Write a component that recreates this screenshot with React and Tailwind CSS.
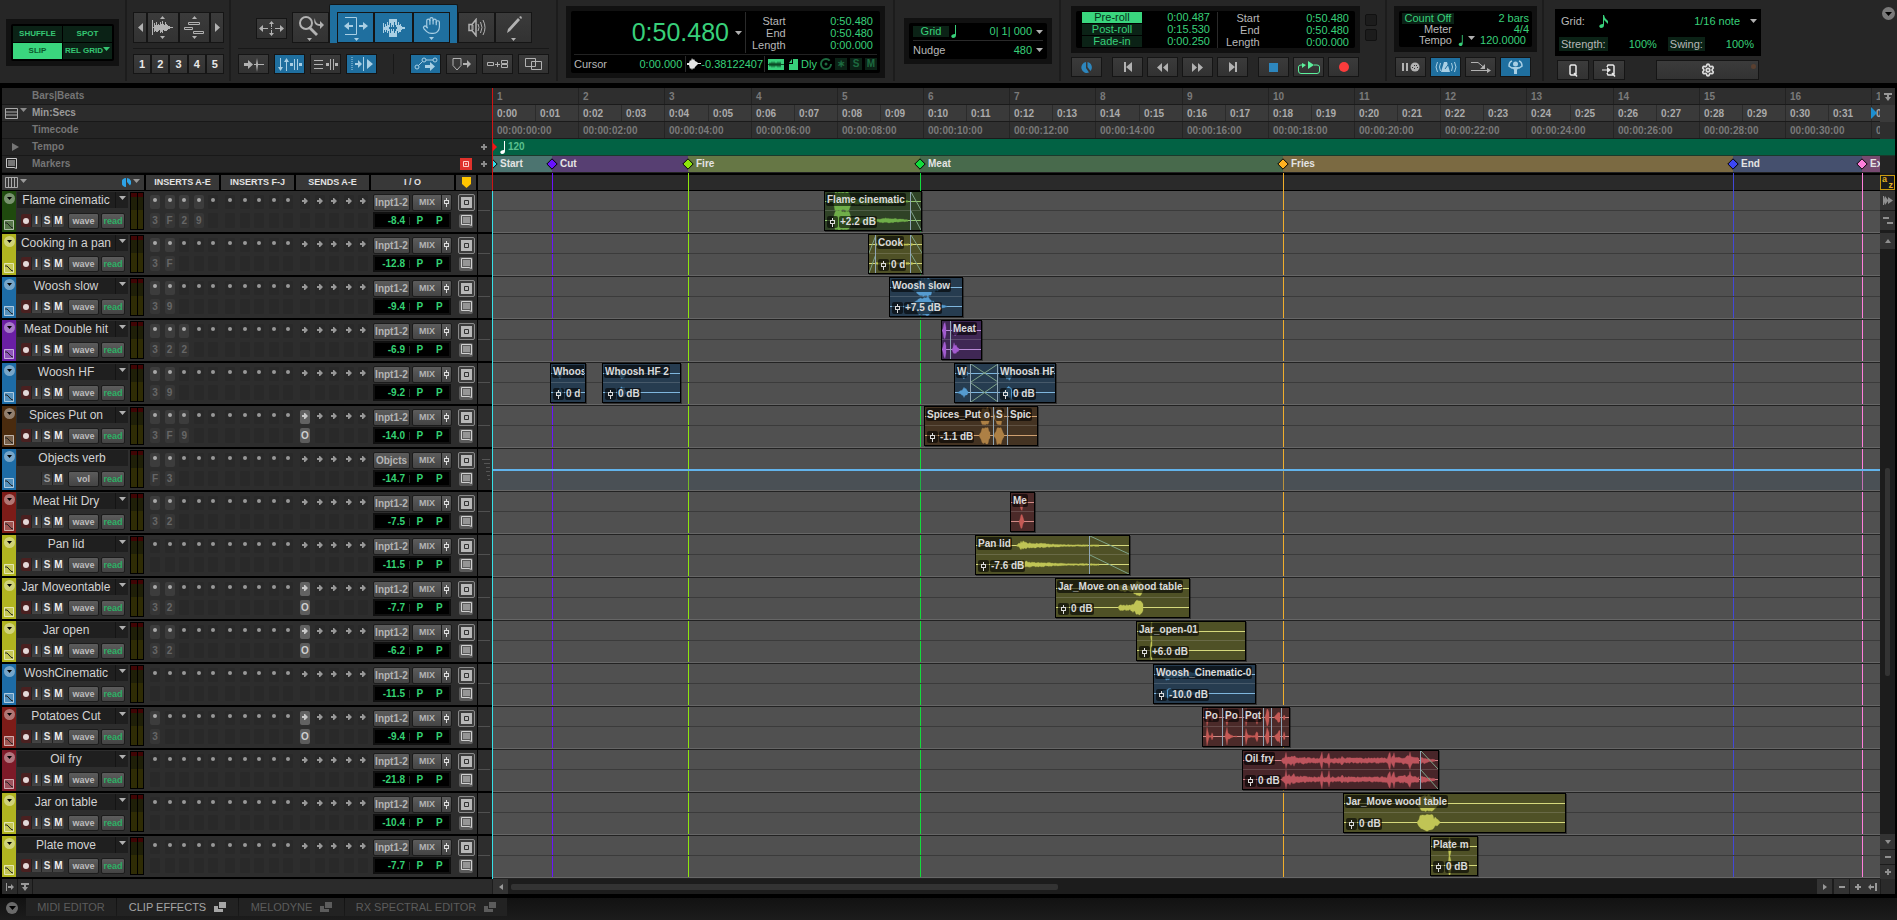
import { useState } from 'react';
import clsx from 'clsx';
import { Hand, Settings } from 'lucide-react';

const PX_PER_SEC = 43.1;

const palettes = {
  green: { strip: 'bg-[#1f4a0e]', clip: 'bg-[#2f4226]', wave: '#6fae49', line: '#8fc46e' },
  yellow: { strip: 'bg-[#b0b420]', clip: 'bg-[#4f5126]', wave: '#c0c455', line: '#d6d97c' },
  blue: { strip: 'bg-[#1d6ca6]', clip: 'bg-[#263c50]', wave: '#559bd0', line: '#7fb6de' },
  purple: { strip: 'bg-[#6a1fa4]', clip: 'bg-[#3f2754]', wave: '#a35bcf', line: '#b98ad6' },
  brown: { strip: 'bg-[#4a2b0e]', clip: 'bg-[#443322]', wave: '#ad8045', line: '#d0a070' },
  red: { strip: 'bg-[#7d1c18]', clip: 'bg-[#4b2a29]', wave: '#c55a55', line: '#d38a86' },
  crimson: { strip: 'bg-[#7d1a28]', clip: 'bg-[#482529]', wave: '#bd545d', line: '#cf7f86' },
};

// env is a list of [x, amplitude] points, one list per clip part
const tracks = [
  { name: 'Flame cinematic', color: 'green', inserts: '3F29', vol: '-8.4', clips: [
    { x: 332, w: 98, parts: [
      { w: 86, name: 'Flame cinematic', db: '+2.2 dB', env: [[8, 0], [10, 10], [24, 10], [26, 3], [45, 4], [52, 2], [62, 3], [72, 2], [84, 1]] },
      { fade: 'out' },
    ] },
  ] },
  { name: 'Cooking in a pan', color: 'yellow', inserts: '3F', vol: '-12.8', clips: [
    { x: 376, w: 55, parts: [
      { w: 7, fade: 'in' },
      { w: 35, name: 'Cook', db: '0 d', env: [[0, 1], [34, 1]] },
      { fade: 'out', env: [[0, 2], [3, 0]] },
    ] },
  ] },
  { name: 'Woosh slow', color: 'blue', inserts: '39', vol: '-9.4', clips: [
    { x: 397, w: 74, parts: [
      { name: 'Woosh slow', db: '+7.5 dB', env: [[12, 0], [22, 3], [30, 9], [38, 10], [44, 5], [58, 0]] },
    ] },
  ] },
  { name: 'Meat Double hit', color: 'purple', inserts: '322', vol: '-6.9', clips: [
    { x: 449, w: 41, parts: [
      { w: 9, env: [[0, 0], [2, 8], [3, 9], [5, 0]] },
      { name: 'Meat', env: [[1, 0], [3, 7], [6, 4], [9, 0]] },
    ] },
  ] },
  { name: 'Woosh HF', color: 'blue', inserts: '39', vol: '-9.2', clips: [
    { x: 58, w: 36, parts: [{ name: 'Whoos', db: '0 d', env: [[5, 0], [9, 6], [12, 0]] }] },
    { x: 110, w: 79, parts: [{ name: 'Whoosh HF 2', db: '0 dB', env: [[14, 0], [18, 6], [21, 5], [24, 0]] }] },
    { x: 462, w: 102, parts: [
      { w: 16, name: 'W', env: [[2, 0], [6, 2], [9, 7], [13, 1], [14, 0]] },
      { w: 27, fade: 'cross' },
      { name: 'Whoosh HF', db: '0 dB', env: [[5, 0], [9, 7], [13, 7], [15, 0]] },
    ] },
  ] },
  { name: 'Spices Put on', color: 'brown', inserts: '3F9', send: true, vol: '-14.0', clips: [
    { x: 432, w: 114, parts: [
      { w: 69, name: 'Spices_Put o', db: '-1.1 dB', env: [[54, 0], [57, 8], [63, 9], [66, 1]] },
      { w: 14, name: 'S', env: [[0, 1], [3, 9], [7, 9], [11, 0]] },
      { name: 'Spic' },
    ] },
  ] },
  { name: 'Objects verb', color: 'blue', aux: true, inserts: 'F3', input: 'Objcts', vol: '-14.7', clips: [] },
  { name: 'Meat Hit Dry', color: 'red', inserts: '32', vol: '-7.5', clips: [
    { x: 518, w: 25, parts: [{ name: 'Me', env: [[8, 0], [10, 8], [11, 8], [13, 1], [14, 0]] }] },
  ] },
  { name: 'Pan lid', color: 'yellow', inserts: '', vol: '-11.5', clips: [
    { x: 483, w: 155, parts: [
      { w: 114, name: 'Pan lid', db: '-7.6 dB', env: [[40, 0], [46, 5], [52, 3], [75, 2], [90, 1], [113, 1]] },
      { fade: 'out', env: [[0, 1], [9, 1], [10, 0]] },
    ] },
  ] },
  { name: 'Jar Moveontable', color: 'yellow', inserts: '32', send: true, vol: '-7.7', clips: [
    { x: 563, w: 135, parts: [
      { name: 'Jar_Move on a wood table', db: '0 dB', env: [[62, 0], [64, 4], [74, 3], [81, 8], [86, 7], [88, 0]] },
    ] },
  ] },
  { name: 'Jar open', color: 'yellow', inserts: '32', send: true, vol: '-6.2', clips: [
    { x: 644, w: 110, parts: [{ name: 'Jar_open-01', db: '+6.0 dB', env: [[13, 0], [14, 10], [15, 10], [16, 0]] }] },
  ] },
  { name: 'WoshCinematic', color: 'blue', inserts: '', vol: '-11.5', clips: [
    { x: 661, w: 103, parts: [
      { name: 'Woosh_Cinematic-0', db: '-10.0 dB', env: [[6, 0], [12, 6], [20, 4], [30, 4], [40, 2], [52, 0]] },
    ] },
  ] },
  { name: 'Potatoes Cut', color: 'red', inserts: '3', send: true, vol: '-9.4', clips: [
    { x: 710, w: 88, parts: [
      { w: 20, name: 'Po', env: [[3, 0], [4, 10], [6, 1], [8, 1], [9, 4], [11, 0]] },
      { w: 20, name: 'Po', env: [[2, 0], [4, 10], [5, 4], [8, 2], [11, 0], [13, 1], [15, 0]] },
      { w: 21, name: 'Pot', env: [[2, 0], [3, 10], [5, 2], [8, 1], [12, 1], [14, 7], [16, 0]] },
      { w: 8, env: [[1, 0], [3, 9], [5, 7], [6, 0]] },
      { w: 10, env: [[2, 0], [6, 6], [8, 7], [9, 0]] },
      { env: [[1, 0], [2, 5], [4, 0]] },
    ] },
  ] },
  { name: 'Oil fry', color: 'crimson', inserts: '', vol: '-21.8', clips: [
    { x: 750, w: 197, parts: [
      { w: 178, name: 'Oil fry', db: '0 dB', env: [[38, 0], [40, 3], [42, 4], [43, 10], [44, 4], [47, 6], [49, 5], [51, 6], [53, 3], [60, 4], [68, 3], [77, 3], [79, 10], [80, 3], [84, 3], [86, 9], [87, 3], [97, 3], [99, 6], [101, 3], [115, 3], [127, 3], [144, 3], [147, 10], [148, 3], [151, 9], [152, 3], [160, 4], [165, 5], [167, 9], [169, 4], [177, 3]] },
      { fade: 'out', env: [[0, 4], [8, 2], [15, 1]] },
    ] },
  ] },
  { name: 'Jar on table', color: 'yellow', inserts: '', vol: '-10.4', clips: [
    { x: 851, w: 223, parts: [{ name: 'Jar_Move wood table', db: '0 dB', env: [[73, 0], [76, 7], [82, 9], [88, 8], [93, 4], [97, 0]] }] },
  ] },
  { name: 'Plate move', color: 'yellow', inserts: '', vol: '-7.7', clips: [
    { x: 938, w: 48, parts: [{ name: 'Plate m', db: '0 dB', env: [[17, 0], [18, 10], [19, 10], [21, 0]] }] },
  ] },
];

const markers = [
  { name: 'Start', x: 0, w: 60, dot: '#35e0e6', band: 'bg-[#4c7470]', line: 'bg-[#35e0e6]' },
  { name: 'Cut', x: 60, w: 136, dot: '#6a12ff', band: 'bg-[#573f72]', line: 'bg-[#6a12ff]' },
  { name: 'Fire', x: 196, w: 232, dot: '#8ee60c', band: 'bg-[#667745]', line: 'bg-[#8ee60c]' },
  { name: 'Meat', x: 428, w: 363, dot: '#12dc3c', band: 'bg-[#486a4c]', line: 'bg-[#12dc3c]' },
  { name: 'Fries', x: 791, w: 450, dot: '#ffb020', band: 'bg-[#7b6a42]', line: 'bg-[#f0ae2c]' },
  { name: 'End', x: 1241, w: 129, dot: '#3c46f5', band: 'bg-[#45506e]', line: 'bg-[#4248d8]' },
  { name: 'Ex', x: 1370, w: 120, dot: '#ff7edb', band: 'bg-[#774a70]', line: 'bg-[#ff7edb]' },
];

const pad = (n) => String(n).padStart(2, '0');

function Svg({ w, h, className, children }) {
  return (
    <svg width={w} height={h} viewBox={`0 0 ${w} ${h}`} fill="currentColor" className={clsx('shrink-0', className)} aria-hidden="true">
      {children}
    </svg>
  );
}

function Caret({ className = 'text-[#b0b0b0]' }) {
  return (
    <Svg w={7} h={4} className={className}><path d="M0 0h7L3.5 4z" /></Svg>
  );
}

function ToolButton({ label, active, className, children }) {
  return (
    <button
      type="button"
      aria-label={label}
      aria-pressed={active}
      className={clsx(
        'flex items-center justify-center border border-[#151515]',
        active ? 'bg-[#1f6f9f] text-[#a9cfe4]' : 'bg-linear-to-b from-[#3b3b3b] to-[#323232] text-[#b2b2b2]',
        className
      )}
    >
      {children}
    </button>
  );
}

function Group({ className, children }) {
  return <div className={clsx('h-[81px] shrink-0 border-r-2 border-[#1c1c1c]', className)}>{children}</div>;
}

function EditModes() {
  return (
    <Group className="w-[127px] px-[6px] pt-[19px]">
      <div className="bg-[#111] p-[5px]">
        <div className="grid grid-cols-2 gap-px rounded-xs bg-black p-[2px] text-[8px] font-bold text-[#36c774]">
          <button type="button" className="h-4 bg-[#0b2216]">SHUFFLE</button>
          <button type="button" className="h-4 bg-[#0b2216]">SPOT</button>
          <button type="button" className="h-4 bg-[#3ad67e] text-[#0b5a2c]">SLIP</button>
          <button type="button" className="flex h-4 items-center justify-center bg-[#0b2216]">
            REL GRID<Caret className="mb-1 text-[#36c774]" />
          </button>
        </div>
      </div>
    </Group>
  );
}

function UpDown({ children }) {
  return (
    <span className="flex flex-col items-center">
      <Svg w={5} h={3}><path d="M2.5 0L5 3H0z" /></Svg>
      {children}
      <Svg w={5} h={3}><path d="M0 0h5L2.5 3z" /></Svg>
    </span>
  );
}

function ZoomGroup() {
  return (
    <Group className="w-[104px] pl-[6px] pt-3">
      <div className="flex w-[91px]">
        <ToolButton label="Zoom out" className="h-[31px] w-[14px]"><Svg w={5} h={9}><path d="M5 0v9L0 4.500z" /></Svg></ToolButton>
        <ToolButton label="Audio zoom" className="h-[31px] flex-1">
          <UpDown>
            <Svg w={21} h={17}>
              <path d="M0 1h1v15H0zM2 4h1v9H2zM3 6h1v6H3zM4 3h1v10H4zM5 6h1v7H5zM6 5h1v7H6zM7 6h1v5H7zM8 3h1v11H8zM9 5h1v8H9zM10 2h1v12h-1zM11 5h1v6h-1zM12 6h1v6h-1zM13 3h1v9h-1zM14 5h1v7h-1zM15 6h1v5h-1zM16 7h2v3h-2zM18 8h3v1h-3zM0 8h16v1H0z" />
            </Svg>
          </UpDown>
        </ToolButton>
        <ToolButton label="MIDI zoom" className="h-[31px] flex-1">
          <UpDown>
            <Svg w={21} h={17}>
              <g fill="none" stroke="currentColor">
                <path d="M4.500 3.500h11v2h-11zM.5 8.500h8v2h-8zM9.500 12.500h10v2h-10z" />
              </g>
            </Svg>
          </UpDown>
        </ToolButton>
        <ToolButton label="Zoom in" className="h-[31px] w-[14px]"><Svg w={5} h={9}><path d="M0 0v9l5-4.500z" /></Svg></ToolButton>
      </div>
      <div className="mt-[5px] h-px w-[91px] bg-[#181818]" />
      <div className="mt-[5px] flex w-[91px]">
        {[1, 2, 3, 4, 5].map((n) => (
          <ToolButton key={n} label={`Zoom preset ${n}`} className="h-5 flex-1">
            <span className="text-[11px] font-bold text-[#e8e8e8]">{n}</span>
          </ToolButton>
        ))}
      </div>
    </Group>
  );
}

function EditTools() {
  return (
    <Group className="w-[327px] px-[7px] pt-1">
      <div className="flex h-[39px] items-end pl-[18px]">
        <ToolButton label="Zoom toggle" className="mr-[5px] mb-1 h-[21px] w-[31px]">
          <Svg w={25} h={15}>
            <path d="M0 7.500L4 4v3h5v1H4v3zM25 7.500L21 4v3h-5v1h5v3zM12.500 0L15 3h-2v3h-1V3h-2zM12.500 15L15 12h-2V9h-1v3h-2zM12 7h1v1h-1z" />
          </Svg>
        </ToolButton>
        <ToolButton label="Zoomer" className="h-[31px] w-[37px]">
          <Svg w={28} h={26}>
            <circle cx="9" cy="8" r="6" fill="none" stroke="currentColor" strokeWidth="2" />
            <path d="M13 11l8 8-2 2-8-8zM18 3c0 4 2 6 5 6V6l4 4-4 4v-3c-5 0-7-4-5-8zM10 23h5l-2.500 3z" />
          </Svg>
        </ToolButton>
        <div className="flex h-[39px] items-end rounded-t-xs border border-b-0 border-[#151515] bg-[#1f6f9f] px-[7px]">
          <ToolButton label="Trim" active className="h-[31px] w-[37px]">
            <Svg w={24} h={26}>
              <path d="M0 11l5-4v3h4v2H5v3zM24 11l-5-4v3h-4v2h4v3zM10 23h5l-2.500 3z" />
              <path d="M1 2.500h11.500v17H1" fill="none" stroke="currentColor" />
            </Svg>
          </ToolButton>
          <ToolButton label="Selector" active className="h-[31px] w-[39px]">
            <Svg w={22} h={18}>
              <path d="M6 0h8v18H6z" />
              <path d="M0 4h1v10H0zM1 8h1v3H1zM2 5h1v8H2zM3 7h1v4H3zM4 3h1v11H4zM5 6h1v6H5zM15 3h1v11h-1zM14 6h1v6h-1zM16 6h1v7h-1zM17 5h1v8h-1zM18 7h1v4h-1zM19 8h3v2h-3z" />
              <path d="M6 8h8v2H6zM7 4h1v10H7zM9 6h1v6H9zM11 3h1v11h-1zM12 6h1v6h-1z" fill="#1f6f9f" />
            </Svg>
          </ToolButton>
          <ToolButton label="Grabber" active className="h-[31px] w-[37px] flex-col gap-[2px]">
            <Hand size={19} strokeWidth={1.5} />
            <Svg w={5} h={3}><path d="M0 0h5L2.5 3z" /></Svg>
          </ToolButton>
        </div>
        <ToolButton label="Scrubber" className="h-[31px] w-[37px]">
          <Svg w={18} h={19}>
            <path d="M1 6.500h3l4-5v16l-4-5H1z" fill="none" stroke="currentColor" strokeWidth="1.500" />
            <path d="M4 7h1v5H4zM10 6q2 3.500 0 7M12.500 4q3 5.500 0 11M15 2q4 7.500 0 15" fill="none" stroke="currentColor" />
          </Svg>
        </ToolButton>
        <ToolButton label="Pencil" className="h-[31px] w-[37px]">
          <Svg w={18} h={26}>
            <path d="M2 18l1-4 10-11 2 2L5 16zM14 2l2-1 1 2-1 1zM6 23h5l-2.500 3z" />
          </Svg>
        </ToolButton>
      </div>
      <div className="mt-[5px] h-px bg-[#181818]" />
      <div className="mt-[5px] flex items-center justify-between">
        <div className="flex gap-[5px]">
          <ToolButton label="Tab to transients" className="h-5 w-[31px]">
            <Svg w={20} h={15}><path d="M0 6h4V3l5 4.500L4 12V9H0zM12 7l1-6 1 6h6v1h-6l-1 7-1-7h-2V7z" /></Svg>
          </ToolButton>
          <ToolButton label="Link timeline" active className="h-5 w-[31px]">
            <Svg w={24} h={13}>
              <path d="M2 0h1v9h2l-2.500 4L0 9h2zM8 13V4H6l2.500-4L11 4H9v9zM12 5h3v3h-3zM16 1h1v11h-1zM19 1h1v11h-1zM21 5h3v3h-3z" />
            </Svg>
          </ToolButton>
          <ToolButton label="Link track" className="h-5 w-[31px]">
            <Svg w={24} h={13}><path d="M0 2h9v1H0zM0 6h9v1H0zM0 10h9v1H0zM12 5h3v3h-3zM16 1h1v11h-1zM19 1h1v11h-1zM21 5h3v3h-3z" /></Svg>
          </ToolButton>
          <ToolButton label="Insertion follows playback" active className="h-5 w-[31px]">
            <Svg w={22} h={14}>
              <path d="M1 0v14" stroke="currentColor" strokeDasharray="1 1" />
              <path d="M4 6h3V3l4 4-4 4V8H4zM12 0h1v14h-1zM16 2l6 5-6 5z" />
            </Svg>
          </ToolButton>
        </div>
        <div className="h-5 w-px bg-[#181818]" />
        <div className="flex gap-[5px]">
          <ToolButton label="Automation follows edit" active className="h-5 w-[31px]">
            <Svg w={24} h={14}>
              <g fill="none" stroke="currentColor">
                <circle cx="3" cy="10" r="2" /><circle cx="10" cy="3" r="2" /><circle cx="21" cy="3" r="2" />
                <path d="M4.500 8.500l4-4M12 3h7" />
              </g>
              <path d="M11 8h5V5l5 4.500-5 4.500v-3h-5z" />
            </Svg>
          </ToolButton>
          <ToolButton label="Markers follow edit" className="h-5 w-[31px]">
            <Svg w={20} h={13}><path d="M1 .5h8v7L5 12 1 7.500z" fill="none" stroke="currentColor" /><path d="M11 5h4V2l4 4-4 4V7h-4z" /></Svg>
          </ToolButton>
          <ToolButton label="Mirrored MIDI editing" className="h-5 w-[31px]">
            <Svg w={22} h={12}>
              <path d="M.5 4.500h6v3h-6zM14.500 2.500h6v3h-6zM14.500 6.500h6v3h-6z" fill="none" stroke="currentColor" />
              <path d="M8 6h2V4h1v2h2v1h-2v2h-1V7H8z" />
            </Svg>
          </ToolButton>
          <ToolButton label="Layered editing" className="h-5 w-[31px]">
            <Svg w={18} h={12}><path d="M.5 .5h10v8H.5zM6.500 3.500h10v8h-10z" fill="none" stroke="currentColor" /></Svg>
          </ToolButton>
        </div>
      </div>
    </Group>
  );
}

function SelectionRows({ className }) {
  return (
    <dl className={clsx('grid grid-cols-[auto_1fr] text-right text-[11px] leading-[12px]', className)}>
      <dt className="text-[#b8b8b8]">Start</dt><dd>0:50.480</dd>
      <dt className="text-[#b8b8b8]">End</dt><dd>0:50.480</dd>
      <dt className="text-[#b8b8b8]">Length</dt><dd>0:00.000</dd>
    </dl>
  );
}

function MainCounter() {
  return (
    <Group className="w-[337px] px-2 pt-[6px]">
      <div className="bg-[#111] p-[5px]">
        <div className="rounded-xs bg-black px-[3px] text-[#38d07a]">
          <div className="flex h-[44px] items-center border-b border-[#222]">
            <button type="button" className="flex h-[41px] w-[172px] items-center justify-end gap-[6px] border-r border-[#2a2a2a] pr-[3px] text-[25px]">
              0:50.480 <Caret />
            </button>
            <SelectionRows className="flex-1 pl-[6px] pr-1" />
          </div>
          <div className="flex h-[18px] items-center text-[11px]">
            <span className="text-[#b8b8b8]">Cursor</span>
            <span className="ml-auto border-r border-[#2a2a2a] pr-[3px]">0:00.000</span>
            <Svg w={14} h={12} className="ml-px text-[#e6e6e6]">
              <path d="M0 5h2l1-3 1 1 1-3 1 2 1-1 1 2 2 1 1 1h3v1h-3l-1 1-2 2-1 2-1-1-1 2-1-2-1 1-1-4H0z" />
            </Svg>
            <span className="border-r border-[#2a2a2a] pr-px">-0.38122407</span>
            <button type="button" aria-label="Timeline data online" className="ml-[3px] flex h-[11px] w-4 items-center justify-center bg-[#38d07a] text-[#0b4a26]">
              <Svg w={16} h={9}><path d="M0 4h1l1-2 1 2 1-3 1 3 1-3 1 3 1-2 1 2 1-3 1 3 1-3 1 3h3v1h-3l-1 3-1-3-1 3-1-3-1 2-1-2-1 3-1-3-1 3-1-3-1 2-1-2H0z" /></Svg>
            </button>
            <Svg w={9} h={11} className="ml-[5px]"><path d="M4 0h5v11H0V5h4zM3 0v4H0z" /></Svg>
            <span className="ml-[3px]">Dly</span>
            <Svg w={12} h={12} className="ml-[3px] text-[#1d6b40]">
              <circle cx="6" cy="6" r="5" fill="none" stroke="currentColor" strokeWidth="2" strokeDasharray="27 4" /><circle cx="6" cy="6" r="1.500" />
            </Svg>
            {['∗', 'S', 'M'].map((t) => (
              <button key={t} type="button" className="ml-[3px] h-3 w-3 bg-[#0b2216] text-[10px] leading-[12px] font-bold text-[#1d6b40]">{t}</button>
            ))}
          </div>
        </div>
      </div>
    </Group>
  );
}

function Note({ className }) {
  return (
    <Svg w={6} h={13} className={className}><path d="M4 0h1v10c0 2-1 3-3 3-3-1-2-4 2-4z" /></Svg>
  );
}

function GridNudge() {
  return (
    <Group className="w-[166px] pl-[9px] pt-[18px]">
      <div className="w-[148px] bg-[#111] p-[5px]">
        <div className="rounded-xs bg-black px-1 text-[11px] text-[#38d07a]">
          <div className="flex h-[18px] items-center border-b border-[#2a2a2a]">
            <label htmlFor="grid-value" className="w-9 bg-[#0b2216] text-center leading-[11px]">Grid</label>
            <Note className="ml-[2px]" />
            <select id="grid-value" className="ml-auto w-[60px] appearance-none text-right outline-none">
              <option>0| 1| 000</option>
            </select>
            <Caret className="ml-1 text-[#b0b0b0]" />
          </div>
          <div className="flex h-[18px] items-center">
            <label htmlFor="nudge-value" className="text-[#b8b8b8]">Nudge</label>
            <select id="nudge-value" className="ml-auto w-[40px] appearance-none text-right outline-none">
              <option>480</option>
            </select>
            <Caret className="ml-1 text-[#b0b0b0]" />
          </div>
        </div>
      </div>
    </Group>
  );
}

function Transport() {
  const rolls = [['Pre-roll', '0:00.487', true], ['Post-roll', '0:15.530'], ['Fade-in', '0:00.250']];
  return (
    <Group className="w-[326px] pl-[10px] pt-[6px]">
      <div className="flex gap-[5px]">
        <div className="w-[289px] bg-[#111] p-[5px]">
          <div className="flex h-[37px] items-center rounded-xs bg-black pl-[6px] text-[11px] text-[#38d07a]">
            <div className="w-[136px] border-r border-[#2a2a2a] pr-[7px]">
              {rolls.map(([label, value, on]) => (
                <div key={label} className="flex h-3 items-center justify-between leading-[11px]">
                  <button type="button" className={clsx('h-[11px] w-[60px]', on ? 'bg-[#3ad67e] text-[#06331a]' : 'bg-[#0b2216]')}>{label}</button>
                  <span>{value}</span>
                </div>
              ))}
            </div>
            <SelectionRows className="flex-1 pl-2 pr-[6px]" />
          </div>
        </div>
        <div className="flex flex-col gap-[3px] pt-2">
          <div className="h-3 w-3 rounded-xs border border-[#111] bg-[#1c1c1c]" />
          <div className="h-3 w-3 rounded-xs border border-[#111] bg-[#1c1c1c]" />
        </div>
      </div>
      <div className="mt-1 flex gap-1">
        <ToolButton label="Online" className="mr-[6px] h-5 w-[31px]">
          <Svg w={11} h={11} className="text-[#2d86bd]"><path d="M5 0v6l3 4.500A5.500 5.500 0 1 1 5 0zM6.500 0A5.500 5.500 0 0 1 9.500 9L6.500 5z" /></Svg>
        </ToolButton>
        <ToolButton label="Return to zero" className="h-5 w-[31px]"><Svg w={8} h={10}><path d="M0 0h2v10H0zM8 0v10L2 5z" /></Svg></ToolButton>
        <ToolButton label="Rewind" className="h-5 w-[31px]"><Svg w={11} h={9}><path d="M5 0v9L0 4.500zM11 0v9L6 4.500z" /></Svg></ToolButton>
        <ToolButton label="Fast forward" className="h-5 w-[31px]"><Svg w={11} h={9}><path d="M0 0v9l5-4.500zM6 0v9l5-4.500z" /></Svg></ToolButton>
        <ToolButton label="Go to end" className="mr-[6px] h-5 w-[31px]"><Svg w={8} h={10}><path d="M6 0h2v10H6zM0 0v10l6-5z" /></Svg></ToolButton>
        <ToolButton label="Stop" className="h-5 w-[31px]"><Svg w={9} h={9} className="text-[#2d86bd]"><path d="M0 0h9v9H0z" /></Svg></ToolButton>
        <ToolButton label="Loop playback" className="h-5 w-[31px]">
          <Svg w={22} h={13} className="text-[#5cf09c]">
            <path d="M5 4H3Q.5 4 .5 6v4q0 2.500 2.500 2.500h16q2.500 0 2.500-2.500V6q0-2-2.500-2h-3" fill="none" stroke="currentColor" />
            <path d="M10 0l6 4-6 4zM4 2l4 2-4 3z" />
          </Svg>
        </ToolButton>
        <ToolButton label="Record" className="h-5 w-[31px]"><Svg w={10} h={10} className="text-[#fa3c3c]"><circle cx="5" cy="5" r="5" /></Svg></ToolButton>
      </div>
    </Group>
  );
}

function MidiControls() {
  return (
    <Group className="w-[157px] pl-[7px] pt-[6px]">
      <div className="w-[143px] bg-[#111] p-[5px]">
        <div className="flex h-[36px] flex-col justify-center rounded-xs bg-black px-[3px] text-[11px] leading-[11px] text-[#38d07a]">
          <div className="flex justify-between"><button type="button" className="w-[52px] bg-[#0b2216]">Count Off</button><span>2 bars</span></div>
          <div className="flex justify-between"><span className="w-[50px] text-right text-[#b8b8b8]">Meter</span><span>4/4</span></div>
          <div className="flex items-center"><span className="w-[50px] text-right text-[#b8b8b8]">Tempo</span><Note className="ml-[6px] h-[11px]" /><Caret className="ml-1 mb-1 text-[#b0b0b0]" /><span className="ml-auto pr-[3px]">120.0000</span></div>
        </div>
      </div>
      <div className="mt-[5px] flex gap-1 pl-px">
        <ToolButton label="Wait for note" className="h-5 w-[31px]">
          <Svg w={18} h={10}>
            <path d="M0 1h2v8H0zM4 1h2v8H4z" /><circle cx="13" cy="5" r="4.500" />
            <path d="M10 5h1v1h-1zM12 3h1v1h-1zM15 5h1v1h-1zM12 6h1v1h-1zM14 3h1v1h-1z" fill="#333" />
          </Svg>
        </ToolButton>
        <ToolButton label="Metronome" active className="h-5 w-[31px]">
          <Svg w={22} h={12}>
            <path d="M9 1h3l3 10H6z" /><path d="M10 8l5-7" stroke="#1f6f9f" />
            <path d="M2.500 1q-3 5 0 10M5.500 2q-2 4 0 8M19.500 1q3 5 0 10M16.500 2q2 4 0 8" fill="none" stroke="currentColor" />
          </Svg>
        </ToolButton>
        <ToolButton label="MIDI merge" className="h-5 w-[31px]">
          <Svg w={20} h={12}><path d="M0 1.500h7l6 5M0 9.500h18" fill="none" stroke="currentColor" /><path d="M14 3v5H9zM16 7l4 2.500-4 2.500z" /></Svg>
        </ToolButton>
        <ToolButton label="Conductor" active className="h-5 w-[31px]">
          <Svg w={15} h={14}>
            <circle cx="7.500" cy="4" r="2.500" />
            <path d="M4 1Q1 2 1 6l3 2h7l3-2q0-4-3-5" fill="none" stroke="currentColor" strokeWidth="1.500" /><path d="M4 7h7l-2 3v4H6v-4z" />
          </Svg>
        </ToolButton>
      </div>
    </Group>
  );
}

function Quantize() {
  return (
    <div className="flex flex-1 justify-between pl-[11px]">
      <div className="w-[206px] pt-[9px]">
        <div className="flex h-[47px] flex-col justify-between bg-black px-1 py-1 text-[11px] text-[#38d07a]">
          <div className="flex items-center pl-[2px]">
            <label htmlFor="q-grid" className="text-[#b8b8b8]">Grid:</label>
            <Svg w={9} h={13} className="ml-[14px]"><path d="M4 0h1l1 3 3 3v3L5 5v5c0 2-1 3-3 3-3-1-2-4 2-4z" /></Svg>
            <select id="q-grid" className="ml-auto w-[60px] appearance-none text-right outline-none">
              <option>1/16 note</option>
            </select>
            <Caret className="ml-[10px] text-[#b0b0b0]" />
          </div>
          <div className="flex items-center pr-[3px]">
            <span className="bg-[#0b2216] px-[2px] leading-[14px] text-[#b8b8b8]">Strength:</span>
            <span className="ml-auto">100%</span>
            <span className="ml-[11px] bg-[#0b2216] px-[2px] leading-[14px] text-[#b8b8b8]">Swing:</span>
            <span className="ml-auto">100%</span>
          </div>
        </div>
        <div className="mt-1 flex gap-1 px-[2px]">
          <ToolButton label="Quantize" className="h-5 w-8">
            <Svg w={10} h={13} className="text-[#e8e8e8]"><path d="M3 1h4l1 1v8l-1 1H3l-1-1V2zM6 9l3 3.500" fill="none" stroke="currentColor" strokeWidth="1.500" /></Svg>
          </ToolButton>
          <ToolButton label="Input quantize" className="h-5 w-8">
            <Svg w={14} h={13} className="text-[#e8e8e8]">
              <path d="M5 3l1-2h5l1 1v8l-1 1H6L5 9M10 9l3 3.500" fill="none" stroke="currentColor" strokeWidth="1.500" /><path d="M0 5.500h5V3l4 3-4 3V6.500H0z" />
            </Svg>
          </ToolButton>
          <ToolButton label="Quantize settings" className="ml-auto h-5 w-[103px]">
            <span className="ml-[7px] flex flex-1 justify-center"><Settings size={14} strokeWidth={3} color="#dcdcdc" /></span>
            <span className="mr-[2px] mb-2 h-[5px] w-[5px] rounded-full bg-[#5a4030]" />
          </ToolButton>
        </div>
      </div>
      <button type="button" aria-label="Toolbar menu" className="mt-[7px] mr-[2px] flex h-[13px] w-[13px] items-center justify-center rounded-full bg-[#7a7a7a]">
        <Caret className="text-black" />
      </button>
    </div>
  );
}

function ArrowDownIcon({ className }) {
  return <Svg w={8} h={8} className={className}><path d="M0 0h8v2H0zM3 2h2v2h2L4 8 1 4h2z" /></Svg>;
}

function ListNote({ className }) {
  return (
    <Svg w={11} h={12} className={className}>
      <path d="M.5 .5h10v10L8 9.500H.5zM2 3h7M2 5h7M2 7h7" fill="none" stroke="currentColor" />
    </Svg>
  );
}

function RulerLabels() {
  return (
    <div className="text-[10px] font-bold text-[#757575]">
      {['Bars|Beats', 'Min:Secs', 'Timecode', 'Tempo', 'Markers'].map((name) => (
        <div key={name} className={clsx('flex h-[17px] items-center border-b border-[#181818] leading-[18px]', name === 'Min:Secs' ? 'bg-[#2c2c2c] text-[#9a9a9a]' : 'bg-[#242424]')}>
          <div className="flex w-[30px] shrink-0 items-center pl-[3px]">
            {name === 'Min:Secs' && (
              <>
                <Svg w={13} h={11} className="text-[#aaa]"><path d="M.5 .5h12v10H.5zM0 4h13M0 7h13" fill="none" stroke="currentColor" /></Svg>
                <Caret className="mb-[6px] ml-[2px] text-[#8a8a8a]" />
              </>
            )}
            {name === 'Tempo' && <Svg w={7} h={8} className="ml-[7px]"><path d="M0 0l7 4-7 4z" /></Svg>}
            {name === 'Markers' && <ListNote className="ml-px text-[#c8c8c8]" />}
          </div>
          <span>{name}</span>
          {(name === 'Tempo' || name === 'Markers') && (
            <span className="ml-auto flex items-center gap-[9px] pr-[5px]">
              {name === 'Markers' && (
                <button type="button" aria-label="Marker view" className="flex h-3 w-3 items-center justify-center bg-[#e0322c]">
                  <Svg w={6} h={6} className="text-[#ffd0cc]"><path d="M.5 .5h5v5h-5zM2.500 2.500h1v1h-1z" fill="none" stroke="currentColor" /></Svg>
                </button>
              )}
              <Svg w={6} h={6} className="text-[#8a8a8a]"><path d="M2 0h2v2h2v2H4v2H2V4H0V2h2z" /></Svg>
            </span>
          )}
        </div>
      ))}
    </div>
  );
}

function ColumnHeads() {
  const head = 'flex items-center justify-center bg-[#383838]';
  return (
    <div className="flex h-[18px] gap-[2px] border-t-2 border-b border-black bg-black text-[9px] font-bold text-[#e4e4e4]">
      <div className={clsx(head, 'w-[142px]')}>
        <Svg w={13} h={11} className="ml-[3px] text-[#aaa]"><path d="M.5 .5h12v10H.5zM3.500 0v11M6.500 0v11M9.500 0v11" fill="none" stroke="currentColor" /></Svg>
        <Caret className="mb-1 ml-[2px] text-[#9a9a9a]" />
        <Svg w={9} h={9} className="ml-auto text-[#2ea3e6]"><path d="M4 0v9A4.500 4.500 0 0 1 4 0zM5 0a4.500 4.500 0 0 1 3 7.500L5 4z" /></Svg>
        <Caret className="mr-1 mb-1 ml-[2px] text-[#9a9a9a]" />
      </div>
      <div className={clsx(head, 'w-[73px]')}>INSERTS A-E</div>
      <div className={clsx(head, 'w-[73px]')}>INSERTS F-J</div>
      <div className={clsx(head, 'w-[73px]')}>SENDS A-E</div>
      <div className={clsx(head, 'w-[83px]')}>I / O</div>
      <div className={clsx(head, 'w-[20px]')}>
        <Svg w={9} h={11} className="text-[#ffc400]"><path d="M0 0h9v7l-4.500 4L0 7z" /></Svg>
      </div>
      <div className={clsx(head, 'flex-1')} />
    </div>
  );
}

function Slots({ kind, values = '', title }) {
  const cells = [0, 1, 2, 3, 4];
  return (
    <div className="grid w-[73px] shrink-0 grid-cols-5 content-start gap-x-1 gap-y-1 pt-1 pl-1 pr-0">
      {cells.map((i) => (
        <button key={`t${i}`} type="button" aria-label={`${title} slot ${i + 1}`} className={clsx('flex h-[14px] w-[10px] justify-center rounded-xs pt-[3px]', values[i] ? (kind === 'send' ? 'bg-[#626262] text-[#c8c8c8]' : 'bg-[#3c3c3c] text-[#a8a8a8]') : 'bg-[#292929] text-[#989898]')}>
          {kind === 'send'
            ? <Svg w={6} h={6}><path d="M0 2h2V0h1l3 3-3 3H2V4H0z" /></Svg>
            : <Svg w={4} h={4}><circle cx="2" cy="2" r="2" /></Svg>}
        </button>
      ))}
      {cells.map((i) => (
        <button key={`b${i}`} type="button" aria-label={`${title} bypass ${i + 1}`} className={clsx('h-[15px] w-[10px] rounded-xs text-[10px] leading-[15px] font-bold', values[i] ? (kind === 'send' ? 'bg-[#5c5c5c] text-[#cfcfcf]' : 'bg-[#363636] text-[#666]') : 'bg-[#292929]')}>
          {values[i]}
        </button>
      ))}
    </div>
  );
}

function Meter() {
  return (
    <div className="mt-px flex h-[38px] w-[14px] gap-px border border-black bg-black">
      {[0, 1].map((i) => (
        <div key={i} className="flex flex-1 flex-col">
          <div className="h-1 bg-[#400404]" />
          <div className="h-[13px] bg-[#1f1f08]" />
          <div className="flex-1 bg-[#2f2c05]" />
        </div>
      ))}
    </div>
  );
}

function FaderIcon({ className }) {
  return <Svg w={5} h={9} className={className}><path d="M2 0h1v2h2v4H3v3H2V6H0V2h2zM1 3v2h3V3z" fillRule="evenodd" /></Svg>;
}

function TrackHeader({ track }) {
  const [muted, setMuted] = useState(false);
  const raised = 'bg-linear-to-b from-[#5c5c5c] to-[#444] rounded-xs border border-[#1c1c1c]';
  const ism = 'h-[13px] bg-linear-to-b from-[#303030] to-[#454545] text-[10px] leading-[13px] font-bold';
  return (
    <div className="flex h-[43px] border-b-2 border-black bg-[#2d2d2d]">
      <div className={clsx('flex w-[14px] shrink-0 flex-col items-center justify-between py-[2px]', palettes[track.color].strip)}>
        <button type="button" aria-label="Track options" className="flex h-[11px] w-[11px] items-center justify-center rounded-full bg-white/40">
          <Svg w={5} h={3} className="text-black"><path d="M0 0h5L2.500 3z" /></Svg>
        </button>
        <button type="button" aria-label="Elastic audio" className="text-white/60">
          <Svg w={10} h={10}><path d="M.5 .5h9v9h-9z" className="fill-white/25" stroke="currentColor" /><path d="M1 3q2-1 4 2t4 3" fill="none" stroke="#222" /></Svg>
        </button>
      </div>
      <div className="ml-px w-[111px] shrink-0 pt-px">
        <div className="flex h-4 bg-[#1f1f1f]">
          <span className={clsx('overflow-hidden text-center text-[12px] leading-[17px] whitespace-nowrap text-[#d2d2d2]', track.aux ? 'w-[110px]' : 'w-[98px]')}>{track.name}</span>
          {!track.aux && (
            <button type="button" aria-label={`${track.name} playlists`} className="flex flex-1 justify-center border-l border-[#141414] pt-1"><Caret /></button>
          )}
        </div>
        <div className="flex h-[25px] items-center pl-1">
          <div className="flex w-[43px] justify-end rounded-xs">
            {!track.aux && (
              <>
                <button type="button" aria-label="Record enable" className="flex h-[13px] w-[10px] items-center justify-center rounded-l-xs bg-[#4a2020]">
                  <span className="h-[6px] w-[6px] rounded-full bg-[#e4d8d8]" />
                </button>
                <button type="button" className={clsx(ism, 'w-[10px] border-l border-[#222] text-[#e4e4e4]')}>I</button>
              </>
            )}
            <button type="button" className={clsx(ism, 'w-[11px] border-l border-[#222]', track.aux ? 'text-[#999]' : 'text-[#e4e4e4]')}>S</button>
            <button type="button" aria-pressed={muted} onClick={() => setMuted(!muted)} className={clsx(ism, 'w-3 rounded-r-xs border-l border-[#222] text-[#f0f0f0]')}>M</button>
          </div>
          <button type="button" className={clsx(raised, 'ml-1 h-4 w-[31px] text-[9px] leading-[14px] font-bold text-[#bcbcbc]')}>{track.aux ? 'vol' : 'wave'}</button>
          <button type="button" className={clsx(raised, 'ml-[2px] h-4 w-6 text-[9px] leading-[14px] font-bold text-[#2eb066]')}>read</button>
        </div>
      </div>
      <div className="ml-[2px]"><Meter /></div>
      <div className="ml-[2px] flex gap-[2px]">
        <Slots title="Inserts A-E" values={track.inserts} />
        <Slots title="Inserts F-J" />
        <Slots title="Sends A-E" kind="send" values={track.send ? 'O' : ''} />
      </div>
      <div className="ml-1 w-[80px] shrink-0 pt-[3px]">
        <div className="flex gap-[2px]">
          <button type="button" className={clsx(raised, 'h-[17px] w-[37px] text-[10px] leading-[15px] font-bold text-[#b4b4b4]')}>{track.input || 'Inpt1-2'}</button>
          <button type="button" className={clsx(raised, 'h-[17px] w-[30px] rounded-r-none text-[9px] leading-[15px] font-bold text-[#b4b4b4]')}>MIX</button>
          <button type="button" aria-label="Output fader" className={clsx(raised, 'ml-[-3px] flex h-[17px] w-[11px] items-center justify-center rounded-l-none')}><FaderIcon className="text-[#ddd]" /></button>
        </div>
        <div className="mt-px flex h-[17px] w-[78px] items-center border-2 border-[#101010] bg-black text-[10px] font-bold text-[#35d274]">
          <span className="w-[30px] text-right">{track.vol}</span>
          <span className="ml-1 h-2 border-l border-[#2a2a2a]" />
          <span className="flex-1 text-center">P</span>
          <span className="flex-1 text-center">P</span>
        </div>
      </div>
      <div className="ml-[2px] flex w-[22px] flex-col items-center gap-[3px] pt-[3px]">
        <button type="button" aria-label="Clip gain view" className="flex h-[17px] w-[17px] items-center justify-center rounded-xs border border-[#8a8a8a] bg-[#3c3c3c]">
          <Svg w={13} h={13} className="text-[#b8b8b8]"><path d="M1 1h11v11H1z" /><path d="M4.500 4.500h4v4h-4z" fill="none" stroke="#333" /></Svg>
        </button>
        <button type="button" aria-label="Comments" className="flex h-[14px] w-[14px] items-center justify-center rounded-xs bg-[#5a5a5a]">
          <ListNote className="text-[#d0d0d0]" />
        </button>
      </div>
      <div className="flex flex-1 justify-end border-l border-black">
        {track.aux ? (
          <div className="flex w-3 flex-col items-end justify-center gap-[3px] pr-[2px]">
            {['w-2', 'w-[6px]', 'w-1', 'w-1', 'w-[3px]', 'w-[2px]'].map((w, i) => <span key={i} className={clsx('h-px bg-[#555]', w)} />)}
          </div>
        ) : <span className="mt-[19px] mr-[2px] h-px w-3 bg-[#505050]" />}
      </div>
    </div>
  );
}

function waveShape(width, env, cy, seed) {
  let s = seed * 7919 + 13;
  const rand = () => {
    s = (s * 1103515245 + 12345) % 2147483648;
    return s / 2147483648;
  };
  const top = [];
  const bottom = [];
  for (let i = 0; i < env.length - 1; i++) {
    const [x0, a0] = env[i];
    const [x1, a1] = env[i + 1];
    for (let x = x0; x < x1; x++) {
      if (x > width) break;
      const amp = a0 + ((a1 - a0) * (x - x0)) / (x1 - x0);
      // loud peaks keep their height, the body gets the jitter
      const low = amp > 7 ? 0.8 : 0.5;
      top.push(`${x},${(cy - amp * (low + (1 - low) * rand())).toFixed(1)}`);
      bottom.unshift(`${x},${(cy + amp * (low + (1 - low) * rand())).toFixed(1)}`);
    }
  }
  return [...top, ...bottom].join(' ');
}

function ClipPart({ part, color, width, last, seed }) {
  const { wave, line } = palettes[color];
  const tag = 'rounded-xs bg-black/60';
  return (
    <div className={clsx('relative h-full shrink-0 overflow-hidden', !last && 'border-r border-[#8fa5b5]')} style={{ width }}>
      <svg width={width} height="38" className="absolute inset-0" aria-hidden="true">
        <path d={`M0 9.500h${width}M0 28.500h${width}`} stroke={line} />
        <path d={`M0 18.500h${width}`} stroke="#ffffff" strokeOpacity="0.15" />
        {part.env && (
          <>
            <polygon points={waveShape(width, part.env, 9.5, seed)} fill={wave} stroke={wave} strokeWidth="0.3" />
            <polygon points={waveShape(width, part.env, 28.5, seed + 3)} fill={wave} stroke={wave} strokeWidth="0.3" />
          </>
        )}
        {part.fade && (
          <g stroke="#7fa389" strokeWidth="1">
            {part.fade !== 'in' && <path d={`M0 0L${width} 18M0 19L${width} 38`} />}
            {part.fade !== 'out' && <path d={`M0 18L${width} 0M0 38L${width} 19`} />}
          </g>
        )}
      </svg>
      <div className="relative flex h-full flex-col justify-between pt-px pb-[2px] text-[10px] font-bold whitespace-nowrap text-[#dadada]">
        {part.name ? (
          <div className="mr-px flex overflow-hidden pl-px"><span className={clsx(tag, 'px-px leading-[13px]')}>{part.name}</span></div>
        ) : <span />}
        {part.db && (
          <div className="mr-px flex gap-px overflow-hidden pl-[2px]">
            <span className={clsx(tag, 'flex h-3 w-[11px] shrink-0 items-center justify-center')}><FaderIcon /></span>
            <span className={clsx(tag, 'px-px leading-[12px]')}>{part.db}</span>
          </div>
        )}
      </div>
    </div>
  );
}

function Clip({ clip, color, seed }) {
  const used = clip.parts.reduce((sum, p) => sum + (p.w || 0), 0);
  return (
    <div
      className={clsx('absolute top-0 flex h-10 overflow-hidden border border-black shadow-[1px_1px_0_rgba(0,0,0,0.4)]', palettes[color].clip)}
      style={{ left: clip.x, width: clip.w }}
    >
      {clip.parts.map((part, i) => (
        <ClipPart
          key={i}
          part={part}
          color={color}
          width={part.w || clip.w - 2 - used}
          last={i === clip.parts.length - 1}
          seed={seed + i}
        />
      ))}
    </div>
  );
}

function Lane({ track, index }) {
  return (
    <div className="relative h-[43px] border-b border-[#222]">
      {track.aux ? (
        <>
          <div className="h-5" />
          <div className="h-[22px] border-t-2 border-b border-t-[#62b4ec] border-b-[#666] bg-[#405364]/30" />
        </>
      ) : (
        <>
          <div className="h-[19px]" />
          <div className="h-[23px] border-t border-b border-t-[#3b3b3b] border-b-[#666]" />
        </>
      )}
      {track.clips.map((clip) => <Clip key={clip.x} clip={clip} color={track.color} seed={index + clip.x} />)}
    </div>
  );
}

function Ruler({ count, step, format, className }) {
  return (
    <div className={clsx('relative h-[17px] overflow-hidden border-b border-[#1a1a1a] text-[10px] leading-[18px] font-bold', className)}>
      {Array.from({ length: count }, (_, i) => (
        <span key={i} className="absolute top-0 h-full border-l border-black/25 pl-1 whitespace-nowrap" style={{ left: Math.round(i * step * PX_PER_SEC) }}>
          {format(i)}
        </span>
      ))}
    </div>
  );
}

function Timeline() {
  return (
    <div className="relative min-w-0 flex-1 overflow-hidden">
      <Ruler count={17} step={2} format={(i) => i + 1} className="bg-[#2e2e2e] text-[#7a7a7a]" />
      <div className="relative">
        <Ruler count={33} step={1} format={(i) => `0:${pad(i)}`} className="bg-[#3a3a3a] text-[#aaa]" />
        <Svg w={6} h={12} className="absolute top-[2px] right-[3px] text-[#1d8fd0]"><path d="M0 0l6 6-6 6z" /></Svg>
      </div>
      <Ruler count={17} step={2} format={(i) => `00:00:${pad(i * 2)}:00`} className="bg-[#303030] text-[#7a7a7a]" />
      <div className="flex h-[17px] items-center border-b border-[#1a3a2c] bg-[#026244] text-[10px] leading-[18px] font-bold text-[#5cc08f]">
        <Svg w={5} h={10} className="text-[#f01818]"><path d="M0 0l5 5-5 5z" /></Svg>
        <Note className="mr-[2px] ml-[3px] text-white" />120
      </div>
      <div className="flex h-[17px] border-b border-[#222] text-[10px] leading-[18px] font-bold text-[#e4e4e4]">
        {markers.map((m) => (
          <div key={m.name} className={clsx('flex shrink-0 items-center', m.band)} style={{ width: m.w }}>
            <Svg w={12} h={12} className="-ml-[6px]"><path d="M6 .8L11.200 6 6 11.200 .8 6z" fill={m.dot} stroke="#000" /></Svg>
            <span className="ml-[2px]">{m.name}</span>
          </div>
        ))}
      </div>
      <div className="relative">
        <div className="h-[18px] border-t-2 border-b border-black bg-[#2a2a2a]" />
        <div className="absolute inset-x-0 top-[18px] bottom-0 bg-[#505050]" />
        {markers.slice(1).map((m) => (
          <div key={m.name} className={clsx('absolute inset-y-0 w-px', m.line)} style={{ left: m.x }} />
        ))}
        <div className="relative">
          {tracks.map((t, i) => <Lane key={t.name} track={t} index={i} />)}
        </div>
        <div className="absolute top-[18px] bottom-0 left-0 w-px bg-[#35e0e6]" />
      </div>
      <div className="absolute top-0 left-0 h-[103px] w-px bg-[#d01414]" />
    </div>
  );
}

function SideRail() {
  const btn = 'flex w-[15px] items-center justify-center bg-[#333] text-[#8f8f8f]';
  return (
    <div className="flex w-[15px] shrink-0 flex-col bg-[#1c1c1c]">
      <div className="flex h-[17px] items-center justify-center bg-[#303030] text-[#999]"><ArrowDownIcon /></div>
      <div className="h-[17px] bg-[#3a3a3a]" />
      <div className="h-[17px] bg-[#2e2e2e]" />
      <div className="h-[17px] border-b border-[#1a3a2c] bg-[#026244]" />
      <div className="h-[17px] bg-[#242424]" />
      <button type="button" aria-label="Keyboard focus" className="mt-[2px] flex h-[15px] justify-between border border-[#c99a10] bg-[#1a1a1a] px-px text-[9px] leading-[7px] font-bold text-[#e0b020]">
        <span>a</span><span className="self-end">z</span>
      </button>
      <button type="button" aria-label="Audio zoom" className={clsx(btn, 'mt-px h-[19px]')}>
        <Svg w={10} h={9}><path d="M0 0h1l1 3V0l3 4V1l5 3.500L5 8V5L2 9V6L1 9H0z" /></Svg>
      </button>
      <button type="button" aria-label="MIDI zoom" className={clsx(btn, 'mt-px h-[19px]')}>
        <Svg w={10} h={8}><path d="M0 0h6v2H0zM4 5h6v2H4z" /></Svg>
      </button>
      <button type="button" aria-label="Scroll up" className={clsx(btn, 'mt-[3px] h-4')}><Svg w={6} h={4}><path d="M3 0l3 4H0z" /></Svg></button>
      <div className="flex flex-1 flex-col px-[5px]">
        <div className="flex-[218]" />
        <div className="flex-[208] rounded-xs bg-[#333]" />
        <div className="flex-[157]" />
      </div>
      <button type="button" aria-label="Scroll down" className={clsx(btn, 'h-[15px]')}><Svg w={6} h={4}><path d="M0 0h6L3 4z" /></Svg></button>
      <button type="button" aria-label="Smaller tracks" className={clsx(btn, 'mt-px h-[14px]')}><Svg w={6} h={2}><path d="M0 0h6v2H0z" /></Svg></button>
      <button type="button" aria-label="Larger tracks" className={clsx(btn, 'mt-px h-[14px]')}><Svg w={6} h={6}><path d="M2 0h2v2h2v2H4v2H2V4H0V2h2z" /></Svg></button>
    </div>
  );
}

function ScrollRow() {
  const btn = 'flex h-[15px] w-[15px] items-center justify-center bg-[#333] text-[#999]';
  return (
    <div className="flex h-[15px] px-[2px]">
      <div className="flex w-[490px] shrink-0 bg-[#2b2b2b] text-[#999]">
        <button type="button" aria-label="Show lists" className="flex w-4 items-center justify-center border-r border-[#181818]">
          <Svg w={8} h={8}><path d="M0 0h1v8H0zM2 3h3V1l3 3-3 3V5H2z" /></Svg>
        </button>
        <button type="button" aria-label="Scroll to track" className="flex w-[15px] items-center justify-center border-r border-[#181818]"><ArrowDownIcon /></button>
      </div>
      <div className="flex flex-1 items-center bg-[#1c1c1c] pl-px">
        <button type="button" aria-label="Scroll left" className={btn}><Svg w={4} h={6}><path d="M4 0v6L0 3z" /></Svg></button>
        <div className="mx-[3px] flex-1"><div className="h-[6px] w-[42%] rounded-xs bg-[#333]" /></div>
        <button type="button" aria-label="Scroll right" className={btn}><Svg w={4} h={6}><path d="M0 0v6l4-3z" /></Svg></button>
        <button type="button" aria-label="Zoom out horizontally" className={clsx(btn, 'ml-[2px]')}><Svg w={6} h={2}><path d="M0 0h6v2H0z" /></Svg></button>
        <button type="button" aria-label="Zoom in horizontally" className={clsx(btn, 'ml-px')}><Svg w={6} h={6}><path d="M2 0h2v2h2v2H4v2H2V4H0V2h2z" /></Svg></button>
        <button type="button" aria-label="Scroll to end" className={btn}><Svg w={9} h={8}><path d="M7 0h2v8H7zM0 4l3-3v2h3v2H3v2z" /></Svg></button>
        <div className="ml-px h-[15px] w-[14px] bg-[#2a2a2a]" />
      </div>
    </div>
  );
}

function EditorTabs() {
  const [tab, setTab] = useState('CLIP EFFECTS');
  const tabs = [['MIDI EDITOR', 'w-[90px]'], ['CLIP EFFECTS', 'w-[121px]'], ['MELODYNE', 'w-[105px]'], ['RX SPECTRAL EDITOR', 'w-[162px]']];
  return (
    <div className="mt-[4px] flex items-start gap-px bg-linear-to-b from-[#121212] to-[#1c1c1c] pl-[6px]">
      <button type="button" aria-label="Editor menu" className="mt-1 mr-[7px] flex h-3 w-3 items-center justify-center rounded-full bg-[#6a6a6a]"><Caret className="text-black" /></button>
      {tabs.map(([name, w]) => (
        <button
          key={name}
          type="button"
          onClick={() => setTab(name)}
          className={clsx('flex h-[18px] items-center justify-center gap-2 bg-[#222] text-[11px]', w, tab === name ? 'text-[#a6a6a6]' : 'text-[#5c5c5c]')}
        >
          {name}
          {name !== 'MIDI EDITOR' && (
            <Svg w={12} h={10} className="mb-px"><path d="M5 0h7v6H5zM0 4h4v3h5v3H0z" /></Svg>
          )}
        </button>
      ))}
      <div className="h-[22px]" />
    </div>
  );
}

export default function App() {
  return (
    <div className="min-h-screen w-full overflow-hidden bg-black font-['Liberation_Sans',Arial,sans-serif] select-none">
      <header className="flex h-[83px] bg-[#262626]">
        <EditModes />
        <ZoomGroup />
        <EditTools />
        <MainCounter />
        <GridNudge />
        <Transport />
        <MidiControls />
        <Quantize />
      </header>

      <main className="mt-[5px] flex px-[2px]">
        <div className="w-[490px] shrink-0">
          <RulerLabels />
          <ColumnHeads />
          {tracks.map((t) => <TrackHeader key={t.name} track={t} />)}
        </div>
        <Timeline />
        <SideRail />
      </main>

      <ScrollRow />
      <EditorTabs />
    </div>
  );
}
